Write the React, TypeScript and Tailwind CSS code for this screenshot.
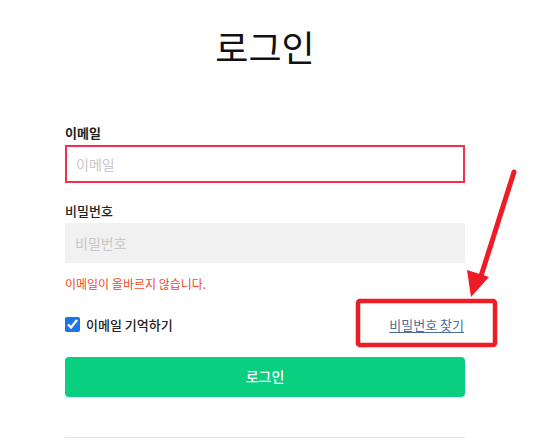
import React from "react";

const FONT = "font-['Noto_Sans_CJK_KR','Noto_Sans',sans-serif]";

export default function App() {
  return (
    <div className={`relative w-[533px] h-[448px] bg-white overflow-hidden ${FONT}`}>
      <div className="w-[400px] ml-[65px] pt-[22px]">
        <h1 className="text-center text-[36px] leading-[48px] text-[#111] font-normal">로그인</h1>

        <form className="mt-[54px] flex flex-col">
          <label className="text-[13px] leading-[18px] font-bold text-[#222]">이메일</label>
          <input
            placeholder="이메일"
            className="mt-[3px] h-[38px] border-2 border-[#f2304c] px-[9px] text-[14px] placeholder:text-[#c8c8c8] outline-none"
          />

          <label className="mt-[19px] text-[13px] leading-[18px] font-medium text-[#222]">비밀번호</label>
          <input
            type="password"
            placeholder="비밀번호"
            className="mt-[3px] h-[40px] bg-[#f1f1f1] px-[10px] text-[14px] placeholder:text-[#c8c8c8] outline-none"
          />

          <p className="mt-[12px] text-[12px] leading-[18px] text-[#f24a26]">이메일이 올바르지 않습니다.</p>

          <div className="mt-[22px] flex items-center justify-between">
            <label className="flex items-center gap-[6px] text-[13px] text-[#222] font-medium">
              <input type="checkbox" defaultChecked className="w-[15px] h-[15px] m-0 accent-[#1a73e8]" />
              이메일 기억하기
            </label>
            <a href="#" className="text-[13px] text-[#4a6e96] underline underline-offset-2 pr-px">비밀번호 찾기</a>
          </div>

          <button
            type="button"
            className="mt-[22px] h-[40px] rounded-[4px] bg-[#0bcf80] text-white text-[14px] font-medium"
          >
            로그인
          </button>
        </form>

        <div className="mt-[40px] h-px bg-[#e4e4e4]" />
      </div>

      {/* annotation overlay */}
      <svg className="absolute inset-0 pointer-events-none" width="533" height="448">
        <rect x="358" y="301" width="137" height="44" rx="2" fill="none" stroke="#ee1c25" strokeWidth="4.5" />
        <line x1="514" y1="172" x2="481" y2="276" stroke="#ee1c25" strokeWidth="5" strokeLinecap="round" />
        <polygon points="471,297 467,270 489,277" fill="#ee1c25" />
      </svg>
    </div>
  );
}
